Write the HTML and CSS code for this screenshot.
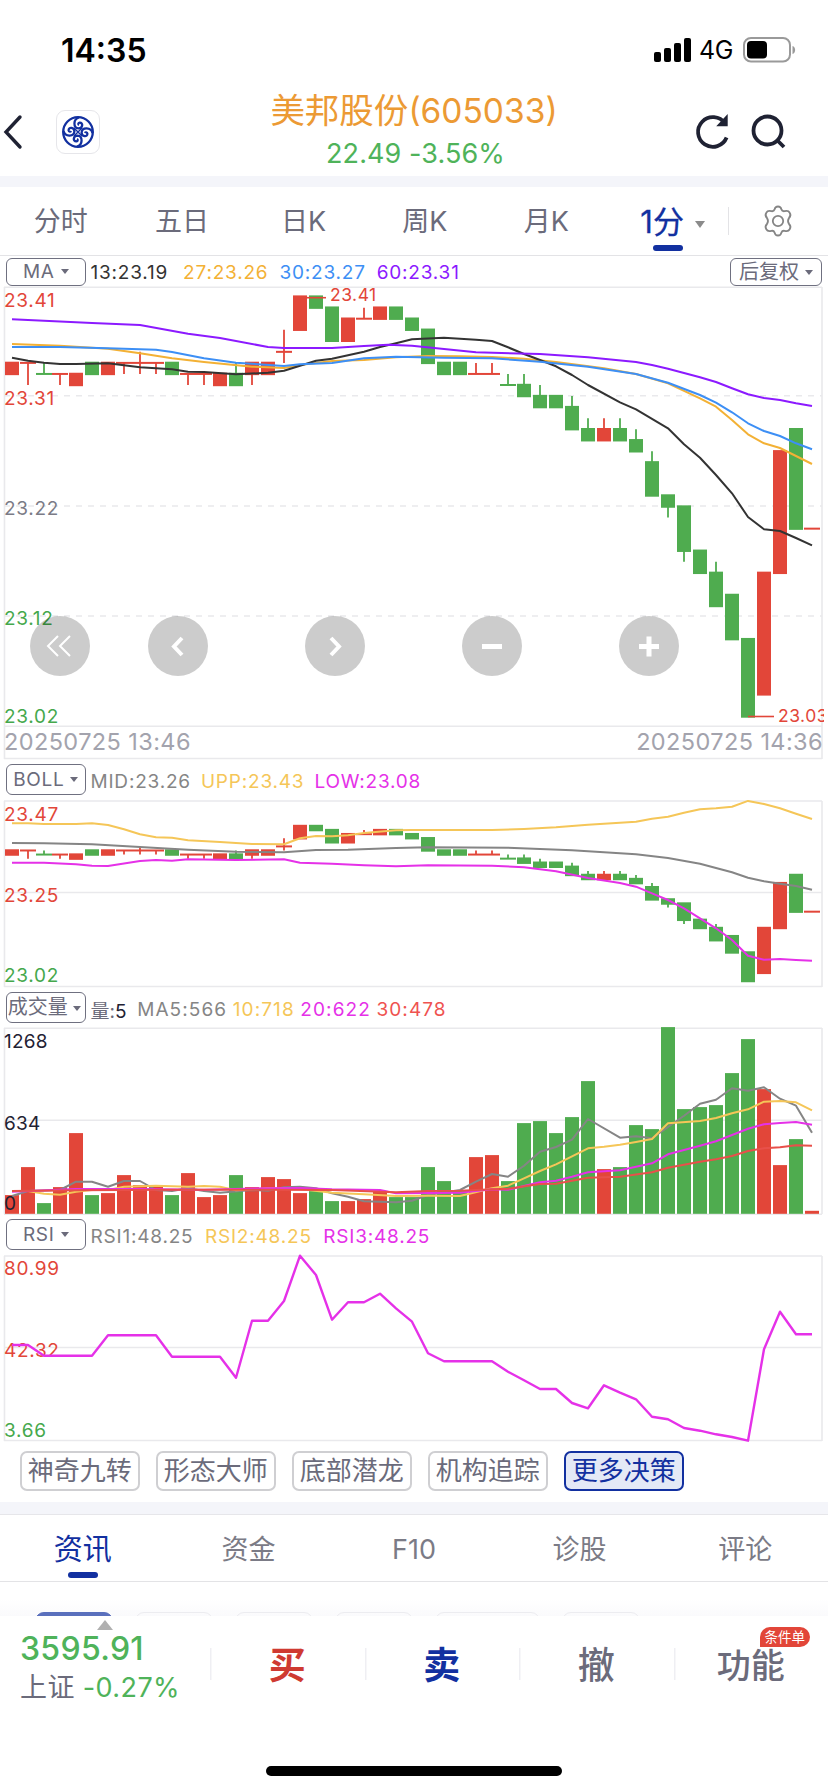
FILE: index.html
```
<!DOCTYPE html>
<html lang="zh-CN">
<head>
    <meta charset="UTF-8">
    <meta name="viewport" content="width=device-width, initial-scale=1.0">
    <title>美邦股份(605033)</title>
    <link rel="stylesheet" href="styles.css">
</head>
<body>
    <!-- Status bar -->
    <div class="status-bar">
        <span class="status-time">14:35</span>
        <div class="status-right">
            <svg width="38" height="24" viewBox="0 0 38 24">
                <rect x="0" y="14" width="7" height="10" rx="2"/>
                <rect x="10" y="10" width="7" height="14" rx="2"/>
                <rect x="20" y="5" width="7" height="19" rx="2"/>
                <rect x="30" y="0" width="7" height="24" rx="2"/>
            </svg>
            <span class="status-net">4G</span>
            <svg width="53" height="26" viewBox="0 0 53 26">
                <rect x="1" y="1" width="46" height="23.5" rx="7" fill="none" stroke="#9a9a9a" stroke-width="2"/>
                <rect x="4" y="4" width="20" height="17.5" rx="4"/>
                <path d="M49.5 9 C53 10 53 16 49.5 17 Z" fill="#9a9a9a"/>
            </svg>
        </div>
    </div>

    <!-- Title -->
    <header class="header">
        <svg class="back" width="20" height="34" viewBox="0 0 20 34"><path d="M17 2 L3 17 L17 32"/></svg>
        <div class="logo">
            <svg width="34" height="34" viewBox="-17 -17 34 34">
                <circle r="14.8"/>
                <g id="petal"><path d="M-14.5 -1 C-13 5 -4 5 -3.6 -0.5 C-3.6 -5 -9.6 -5.4 -9.4 -1.6 C-9.2 0 -7.4 0 -7 -1"/></g>
                <use href="#petal" transform="rotate(90)"/>
                <use href="#petal" transform="rotate(180)"/>
                <use href="#petal" transform="rotate(270)"/>
                <path d="M-4 -4 L4 4 M-4 4 L4 -4" stroke-width="1.4"/>
            </svg>
        </div>
        <div class="title">
            <div class="name">美邦股份<span>(605033)</span></div>
            <div class="quote">22.49 -3.56%</div>
        </div>
        <div class="actions">
            <svg width="36" height="36" viewBox="0 0 36 36"><path d="M30 9.5 A14.8 14.8 0 1 0 31.6 23.5"/><path d="M31.5 3 V11 H24 Z" stroke-width="2.4" fill="#1f2233"/></svg>
            <svg width="36" height="36" viewBox="0 0 36 36"><circle cx="16.5" cy="16.5" r="14"/><path d="M26.5 26.5 L33 33"/></svg>
        </div>
    </header>

    <!-- Period tabs -->
    <nav class="period-tabs">
        <a>分时</a>
        <a>五日</a>
        <a>日K</a>
        <a>周K</a>
        <a>月K</a>
        <a class="active">1分<i class="caret"></i></a>
        <div class="settings">
            <svg width="32" height="32" viewBox="0 0 32 32">
                <path d="M12.6 4.4 Q13.2 1.5 16 1.5 Q18.8 1.5 19.4 4.4 Q20.2 6.6 22.6 6.2 Q26.2 5 27.7 7.7 Q29.5 10.6 27 13 Q25 16 27 19 Q29.5 21.4 27.7 24.3 Q26.2 27 22.6 25.8 Q20.2 25.4 19.4 27.6 Q18.8 30.5 16 30.5 Q13.2 30.5 12.6 27.6 Q11.8 25.4 9.4 25.8 Q5.8 27 4.3 24.3 Q2.5 21.4 5 19 Q7 16 5 13 Q2.5 10.6 4.3 7.7 Q5.8 5 9.4 6.2 Q11.8 6.6 12.6 4.4 Z"/>
                <circle cx="16" cy="16" r="5.2"/>
            </svg>
        </div>
    </nav>

    <!-- K line -->
    <div class="legend legend-ma">
        <button class="picker">MA<i class="caret"></i></button>
        <span class="c-black">13:23.19</span>
        <span class="c-orange">27:23.26</span>
        <span class="c-blue">30:23.27</span>
        <span class="c-purple">60:23.31</span>
        <button class="picker picker-right">后复权<i class="caret"></i></button>
    </div>
    <div class="panel">
        <svg id="mainChart" width="828" height="474"></svg>
        <div class="controls">
            <button><svg viewBox="0 0 60 60" class="thin"><path d="M28 20 L18 30 L28 40 M40 20 L30 30 L40 40"/></svg></button>
            <button><svg viewBox="0 0 60 60"><path d="M34 22 L26 30.5 L34 39"/></svg></button>
            <button><svg viewBox="0 0 60 60"><path d="M26 22 L34 30.5 L26 39"/></svg></button>
            <button><svg viewBox="0 0 60 60" class="thick"><path d="M20 30.5 H40"/></svg></button>
            <button><svg viewBox="0 0 60 60" class="thick"><path d="M20 30.5 H40 M30 20.5 V40.5"/></svg></button>
        </div>
    </div>

    <!-- BOLL -->
    <div class="legend legend-boll">
        <button class="picker">BOLL<i class="caret"></i></button>
        <span class="c-gray">MID:23.26</span>
        <span class="c-yellow">UPP:23.43</span>
        <span class="c-magenta">LOW:23.08</span>
    </div>
    <div class="panel"><svg id="bollChart" width="828" height="188"></svg></div>

    <!-- Volume -->
    <div class="legend legend-vol">
        <button class="picker picker-cn">成交量<i class="caret"></i></button>
        <span class="c-dark"><em>量:</em>5</span>
        <span class="c-gray">MA5:566</span>
        <span class="c-yellow">10:718</span>
        <span class="c-magenta">20:622</span>
        <span class="c-coral">30:478</span>
    </div>
    <div class="panel"><svg id="volChart" width="828" height="189"></svg></div>

    <!-- RSI -->
    <div class="legend legend-rsi">
        <button class="picker">RSI<i class="caret"></i></button>
        <span class="c-gray">RSI1:48.25</span>
        <span class="c-yellow">RSI2:48.25</span>
        <span class="c-magenta">RSI3:48.25</span>
    </div>
    <div class="panel"><svg id="rsiChart" width="828" height="188"></svg></div>

    <div class="tools">
        <button>神奇九转</button>
        <button>形态大师</button>
        <button>底部潜龙</button>
        <button>机构追踪</button>
        <button class="active">更多决策</button>
    </div>

    <!-- Info tabs -->
    <div class="band"></div>
    <nav class="info-tabs">
        <a class="active">资讯</a>
        <a>资金</a>
        <a>F10</a>
        <a>诊股</a>
        <a>评论</a>
    </nav>
    <div class="filters">
        <i class="active"></i><i></i><i></i><i></i><i class="wide"></i><i></i>
    </div>

    <!-- Bottom bar -->
    <footer class="bottom-bar">
        <div class="index">
            <i class="expand"></i>
            <div class="index-value">3595.91</div>
            <div class="index-change">上证 <span>-0.27%</span></div>
        </div>
        <div class="trade buy">买</div>
        <div class="trade sell">卖</div>
        <div class="trade cancel">撤</div>
        <div class="trade more"><span>功能<b class="badge">条件单</b></span></div>
    </footer>
    <div class="home-indicator"></div>

    <script src="charts.js"></script>
</body>
</html>
```
FILE: styles.css
```
* {
    box-sizing: border-box;
}

body {
    margin: 0;
    width: 828px;
    height: 1792px;
    overflow: hidden;
    background: #fff;
    font-family: Inter, "Noto Sans CJK SC", sans-serif;
    color: #6b6b7b;
}

button {
    font-family: inherit;
    color: inherit;
    margin: 0;
    padding: 0;
}

svg {
    display: block;
    overflow: visible;
}

/* status bar */
.status-bar {
    height: 88px;
    padding: 11px 32px 0 61px;
    display: flex;
    align-items: center;
    justify-content: space-between;
    color: #000;
}

.status-time {
    padding-top: 2px;
    font-size: 32px;
    font-weight: 600;
}

.status-right {
    display: flex;
    align-items: center;
}

.status-net {
    font-size: 25px;
    width: 36px;
    margin: 0 8px 0 7px;
    letter-spacing: -0.3px;
}

/* header */
.header {
    height: 88px;
    display: flex;
    align-items: center;
    padding-left: 3px;
}

.back {
    fill: none;
    stroke: #1f2233;
    stroke-width: 3.4;
    stroke-linecap: round;
}

.logo {
    width: 44px;
    height: 44px;
    margin-left: 33px;
    border: 1px solid #e6e6ea;
    border-radius: 9px;
    display: flex;
    align-items: center;
    justify-content: center;
}

.logo svg {
    fill: none;
    stroke: #1230a0;
    stroke-width: 2.3;
}

.title {
    width: 562px;
    margin-left: 33px;
    text-align: center;
}

.name {
    font-size: 34.5px;
    line-height: 42px;
    color: #ec9a34;
}

.name span {
    font-size: 33.5px;
}

.quote {
    padding-left: 3px;
    font-size: 27px;
    line-height: 43px;
    letter-spacing: 0.1px;
    color: #4fb35a;
}

.actions {
    display: flex;
    gap: 20px;
}

.actions svg {
    fill: none;
    stroke: #1f2233;
    stroke-width: 3.8;
}

/* period tabs */
.period-tabs {
    height: 80px;
    border-top: 11px solid #f4f5fa;
    border-bottom: 1px solid #e3e3e6;
    display: flex;
    font-size: 27px;
    line-height: 69px;
}

.period-tabs a {
    width: 121.4px;
    text-align: center;
    position: relative;
}

.period-tabs .active {
    padding-left: 10px;
    color: #1230a0;
    font-size: 31px;
    -webkit-text-stroke: 0.3px #1230a0;
}

.period-tabs .active .caret {
    margin-left: 11px;
    border-width: 7px 5.5px 0;
    color: #8b8b8b;
}

.period-tabs .active::after,
.info-tabs .active::after {
    content: "";
    position: absolute;
    left: 50%;
    bottom: 4px;
    width: 30px;
    height: 6px;
    margin-left: -15px;
    border-radius: 3px;
    background: #1230a0;
}

.caret {
    display: inline-block;
    border: 4.5px solid transparent;
    border-top: 5.5px solid;
    border-bottom: 0;
    vertical-align: middle;
}

.settings {
    flex: 1;
    display: flex;
    align-items: center;
}

.settings::before {
    content: "";
    width: 1px;
    height: 28px;
    background: #e3e3e6;
    margin-right: 33px;
}

.settings svg {
    fill: none;
    stroke: #858585;
    stroke-width: 1.8;
}

/* indicator legends */
.legend {
    display: flex;
    align-items: center;
    padding: 0 6px;
    font-size: 19px;
    letter-spacing: 0.8px;
    white-space: nowrap;
}

.legend em {
    font-style: normal;
    color: #6b6b7b;
    letter-spacing: 0;
}

.picker {
    width: 79.5px;
    height: 31px;
    margin-right: 5px;
    border: 1.5px solid #6f7080;
    border-radius: 6px;
    background: #fff;
    font-size: 19px;
    line-height: 24px;
    letter-spacing: 0.7px;
}

.picker .caret {
    margin-left: 6px;
    margin-bottom: 1px;
}

.picker-cn {
    padding-right: 3px;
    font-size: 20px;
    letter-spacing: 0;
}

.picker-cn .caret {
    margin-left: 5px;
}

.picker-right {
    width: 92px;
    margin: 0 0 0 auto;
    font-size: 20px;
    letter-spacing: 0;
}

.legend-ma {
    height: 30px;
    padding-top: 1px;
}

.legend-ma .picker {
    height: 28px;
}

.legend-ma span {
    margin-right: 11px;
    padding-top: 2px;
}

.legend-ma .c-black {
    margin-right: 15px;
}

.legend-boll {
    height: 40px;
    padding-bottom: 1px;
}

.legend-vol {
    height: 38px;
    letter-spacing: 1.1px;
}

.legend-rsi {
    height: 39px;
}

.legend-boll span,
.legend-rsi span {
    margin-right: 11.5px;
    padding-top: 4px;
}

.legend-boll span {
    margin-right: 10px;
}

.legend-vol span {
    margin-right: 5.5px;
    padding-top: 4px;
}

.legend-vol .c-dark {
    margin-right: 9.5px;
}

.c-black { color: #333; }
.c-dark { color: #1f2233; }
.c-gray { color: #858585; }
.c-orange { color: #f3b135; }
.c-yellow { color: #f5c658; }
.c-blue { color: #3d8ff5; }
.c-purple { color: #8c1aff; }
.c-magenta { color: #e531e8; }
.c-coral { color: #ef5350; }

/* charts */
.panel {
    position: relative;
}

.frame {
    fill: none;
    stroke: #e9e9ec;
    stroke-width: 1.6;
}

.dash {
    stroke-dasharray: 6 6;
}

.up { fill: #e24639; stroke: #e24639; }
.down { fill: #4fac4f; stroke: #4fac4f; }

.line {
    fill: none;
    stroke-width: 2;
    stroke-linejoin: round;
}

#rsiChart .line {
    stroke-width: 2.4;
}

.axis {
    font-size: 19px;
    letter-spacing: 0.7px;
}

#volChart .axis {
    letter-spacing: 0.2px;
}

.axis-date {
    font-size: 23.5px;
    letter-spacing: 0.4px;
    fill: #a3a3ad;
}

.axis-red { fill: #e24639; }
.axis-green { fill: #45a84c; }
.axis-gray { fill: #7b7b86; }
.axis-dark { fill: #1f2233; }

.mark {
    font-size: 17.5px;
    letter-spacing: 0.5px;
    fill: #e24639;
}

.controls {
    position: absolute;
    left: 30px;
    top: 330px;
    display: grid;
    grid-template-columns: 118px 157px 156.5px 157px 60px;
}

.controls button {
    width: 60px;
    height: 60px;
    border: 0;
    border-radius: 50%;
    background: rgba(0, 0, 0, 0.2);
}

.controls svg {
    fill: none;
    stroke: #fff;
    stroke-width: 4;
}

.controls .thin { stroke-width: 2; }
.controls .thick { stroke-width: 5; }

/* decision tools */
.tools {
    height: 60px;
    padding: 9px 20px 0;
    display: flex;
    gap: 16.5px;
}

.tools button {
    width: 119.5px;
    height: 40px;
    border: 2px solid #cfcfd2;
    border-radius: 7px;
    background: #fff;
    font-size: 26px;
    line-height: 36px;
}

.tools .active {
    border-color: #1230a0;
    background: #e4e9f6;
    color: #1230a0;
}

/* info tabs */
.band {
    height: 12px;
    background: #f4f5fa;
}

.info-tabs {
    height: 68px;
    border-top: 1px solid #e6e6ea;
    border-bottom: 1px solid #e3e3e6;
    display: flex;
    font-size: 27px;
    line-height: 69px;
    color: #7b7b86;
}

.info-tabs a {
    flex: 1;
    text-align: center;
    position: relative;
}

.info-tabs .active {
    color: #1230a0;
    font-size: 29px;
}

.info-tabs .active::after {
    bottom: 3px;
}

.filters {
    height: 34px;
    padding: 30px 35px 0;
    display: flex;
    gap: 22px;
    overflow: hidden;
    background: linear-gradient(#fff 50%, #fafafc);
}

.filters i {
    flex: none;
    width: 78px;
    height: 40px;
    border: 1.5px solid #ececf0;
    border-radius: 9px;
}

.filters .wide {
    width: 105px;
}

.filters .active {
    background: #5a70bd;
    border-color: #5a70bd;
}

/* bottom bar */
.bottom-bar {
    height: 150px;
    display: flex;
    background: #fff;
}

.index {
    width: 210px;
    padding: 4px 0 0 20px;
}

.expand {
    display: block;
    width: 0;
    margin-left: 77px;
    border: 8px solid transparent;
    border-bottom: 10px solid #b0b0b0;
    border-top: 0;
}

.index-value {
    font-size: 32px;
    line-height: 38px;
    font-weight: 500;
    letter-spacing: 0.3px;
    color: #4fb35a;
}

.index-change {
    font-size: 27px;
    line-height: 39px;
    letter-spacing: 0.4px;
}

.index-change span {
    color: #4fb35a;
}

.trade {
    width: 154.5px;
    height: 100px;
    font-size: 37px;
    line-height: 100px;
    font-weight: 700;
    text-align: center;
    background: linear-gradient(#efeff3, #efeff3) no-repeat left 32px / 1.5px 32px;
}

.buy { color: #cf3a31; }
.sell { color: #1230a0; }
.cancel { font-weight: 500; }

.more {
    font-size: 34px;
    font-weight: 500;
}

.more span {
    position: relative;
}

.badge {
    position: absolute;
    left: 43px;
    top: -18px;
    width: 50px;
    height: 20px;
    border-radius: 10px 10px 10px 0;
    background: #e24639;
    color: #fff;
    font-size: 13.5px;
    font-weight: 400;
    line-height: 20px;
}

.home-indicator {
    width: 296px;
    height: 10px;
    margin: 0 auto;
    border-radius: 5px;
    background: #000;
}
```
FILE: charts.js
```
const NS = 'http://www.w3.org/2000/svg';
const STEP = 16;
const FIRST = 12;

// [dir, top, bottom, high, low] in cents below 23.41
const candles = [
    ['u', 6, 7], ['u', 6, 6, 6, 8], ['d', 7, 7, 6, 7], ['u', 7, 7, 7, 8], ['u', 7, 8],
    ['d', 6, 7], ['u', 6, 7], ['u', 6, 6, 6, 7], ['u', 6, 6, 5, 7], ['u', 6, 6, 6, 7],
    ['d', 6, 7], ['u', 7, 7, 7, 8], ['u', 7, 7, 7, 8], ['u', 7, 8], ['d', 7, 8, 6, 8],
    ['u', 6, 7, 6, 8], ['u', 6, 7], ['u', 5, 5, 3, 6], ['u', 0, 3], ['d', 0, 1],
    ['d', 1, 4], ['u', 2, 4], ['u', 2, 2, 1, 2], ['u', 1, 2], ['d', 1, 2],
    ['d', 2, 3], ['d', 3, 6], ['d', 6, 7], ['d', 6, 7], ['u', 7, 7, 6, 7],
    ['u', 7, 7, 6, 7], ['d', 8, 8, 7, 8], ['d', 8, 9, 7, 9], ['d', 9, 10, 8, 10], ['d', 9, 10],
    ['d', 10, 12, 9, 12], ['d', 12, 13, 11, 13], ['u', 12, 13, 11, 13], ['d', 12, 13, 11, 13], ['d', 13, 14, 12, 14],
    ['d', 15, 18, 14, 18], ['d', 18, 19, 18, 20], ['d', 19, 23, 19, 24], ['d', 23, 25], ['d', 25, 28, 24, 28],
    ['d', 27, 31], ['d', 31, 38], ['u', 25, 36], ['u', 14, 25], ['d', 12, 21], ['u', 21, 21]
];

const volumes = [
    18.7, 46.7, 10.7, 26.7, 80.7, 18.7, 20.7, 38.7, 28.7, 28.7, 18.7, 40.7, 16.7, 18.7, 38.7, 26.7, 36.7,
    34.7, 20.7, 22.7, 12.7, 12.7, 14.7, 22, 16.7, 16.7, 46.7, 32.7, 22.7, 56.7, 58.7, 32.7, 90.7, 92.7,
    80.7, 96.7, 132.7, 44.7, 46.7, 88.7, 84.7, 186.7, 104.7, 106.7, 108.7, 140.7, 174.7, 124.7, 48.7, 74.7, 3
];

function add(svg, tag, attrs, text) {
    const el = document.createElementNS(NS, tag);
    for (const k in attrs) el.setAttribute(k, attrs[k]);
    if (text) el.textContent = text;
    svg.appendChild(el);
    return el;
}

function hline(svg, y, dashed) {
    add(svg, 'path', { class: dashed ? 'frame dash' : 'frame', d: `M4 ${y} H822` });
}

function sides(svg, top, bottom) {
    add(svg, 'path', { class: 'frame', d: `M4.5 ${top} V${bottom} M822 ${top} V${bottom}` });
}

function label(svg, text, y, color) {
    add(svg, 'text', { class: 'axis axis-' + color, x: 4, y: y }, text);
}

// "index y index y ..." pairs
function line(svg, color, data) {
    const n = data.trim().split(/\s+/).map(Number);
    const pts = [];
    for (let i = 0; i < n.length; i += 2) pts.push((FIRST + n[i] * STEP) + ',' + n[i + 1]);
    add(svg, 'polyline', { class: 'line', stroke: color, points: pts.join(' ') });
}

function drawCandles(svg, base, scale) {
    candles.forEach(([dir, top, bottom, high, low], i) => {
        const x = FIRST + i * STEP;
        const cls = dir === 'u' ? 'up' : 'down';
        const y = v => base + v * scale;
        if (high !== undefined) {
            add(svg, 'path', { class: cls, 'stroke-width': 1.8, d: `M${x} ${y(high)} V${y(low)}` });
        }
        if (top === bottom) {
            add(svg, 'path', { class: cls, 'stroke-width': 2, d: `M${x - 8} ${y(top)} h16` });
        } else {
            add(svg, 'rect', { class: cls, 'stroke-width': 0, x: x - 7, y: y(top) - 1.2, width: 14, height: y(bottom) - y(top) + 2.4 });
        }
    });
}

// K line
const main = document.getElementById('mainChart');
hline(main, 1.3);
hline(main, 109.7, true);
hline(main, 220, true);
hline(main, 330, true);
hline(main, 440.3);
hline(main, 472.5);
sides(main, 1, 473);
drawCandles(main, 10.6, 11.05);
line(main, '#f3b135', '0 58 3 59.7 6 62.7 8 67.3 10 72.3 12 76 15 80.7 17 82 18 79 20 75 22 74 24 71.3 26 70 28 70.3 30 71 32 72.7 34 76 37 82.3 39 88 41 97.3 43 112.3 44 120.7 45 134 46 148.3 47 157.3 48 162 49 170 50 178');
line(main, '#333', '0 71.7 1 74.7 2 76.7 3 78 4 78 6 77.3 8 81.3 9 82.3 10 83.3 11 85.7 12 86 14 88.3 16 86.7 17 84.7 18 79.7 19 74.7 20 72.7 22 65.7 23 61 24 57.3 25 53.3 27 51.7 29 53.7 30 55 31 61.3 32 68 33 74 34 80.3 35 89 36 99 38 116.3 39 123.3 41 142.3 42 158.3 43 171.7 44 189 45 207.3 46 231 47 243.3 48 245 49 252 50 259.3');
line(main, '#3d8ff5', '0 61 3 61 6 62.3 9 63.7 10 66 12 72.3 14 76.7 17 80 18 78.3 20 77 22 72.3 24 70.7 27 71.7 30 72.3 33 75.7 36 80.7 39 88 41 96.7 43 109 44 116.7 45 126.3 46 137.3 47 145 48 150 49 157.3 50 163.3');
line(main, '#8c1aff', '0 33.3 5 37 8 39 11 47.7 13 52 16 61 17 62 20 62 22 60 23.5 58.7 25 59.7 27 63 29 66.3 33 68 36 71.3 39 76 40 79 41 82.7 43 91.3 44 96 45 102.3 46 108.3 47 112 48 114 49 117.3 50 120');
label(main, '23.41', 21, 'red');
label(main, '23.31', 119, 'red');
label(main, '23.22', 229, 'gray');
label(main, '23.12', 339, 'green');
label(main, '23.02', 437, 'green');
add(main, 'path', { class: 'up', 'stroke-width': 1.6, d: 'M307 11.7 H326' });
add(main, 'text', { class: 'mark', x: 330, y: 15.3 }, '23.41');
add(main, 'path', { class: 'up', 'stroke-width': 1.6, d: 'M748 430.5 H774' });
add(main, 'text', { class: 'mark', x: 778, y: 435.7 }, '23.03');
add(main, 'rect', { x: 824, y: 400, width: 4, height: 40, fill: '#fff' });
add(main, 'text', { class: 'axis-date', x: 4, y: 464 }, '20250725 13:46');
add(main, 'text', { class: 'axis-date', x: 823, y: 464, 'text-anchor': 'end' }, '20250725 14:36');

// BOLL
const boll = document.getElementById('bollChart');
hline(boll, 1);
hline(boll, 92.5);
hline(boll, 186.5);
sides(boll, 1, 187);
drawCandles(boll, 26, 4.08);
line(boll, '#f5c658', '0 23.3 1 23.3 2 24 4 24 5 23.3 6 25 7 29.3 8 34.3 9 37.3 10 37.7 11 40.3 13 42 15 44 17 44.3 18 38.3 19 36 20 36.3 21 35.3 22 33 24 30.3 25 30 30 30 32 29 34 27.3 36 24.7 39 21.7 40 18.7 41 16.7 42 12.7 43 9.3 44 8.3 45 6.7 46 0.9 47 4 48 8.3 49 13.7 50 19');
line(boll, '#858585', '0 43 2 43.3 5 44.3 8 47 11 49.7 14 51.7 17 52.3 19 50 21 49.7 24 48 26 47.3 31 47.7 35 50.3 39 54.3 41 58 43 63.7 45 72.3 46 77.7 47 81.3 48 83.7 49 86 50 89.7');
line(boll, '#e531e8', '0 62.7 2 62.7 4 64.3 5 65.7 6 66 8 61 9 60 10 60.7 11 59.3 14 60 17 59.3 18 62.7 20 63.7 22 65.3 24 66.3 26 65.3 30 65.7 32 67.3 34 71.3 36 78 38 83 39 86.7 40 93.3 41 100 42 108.3 43 118.3 44 128.3 45 140 46 155.7 47 159.7 48 159 49 160 50 160.7');
label(boll, '23.47', 20.5, 'red');
label(boll, '23.25', 102.3, 'red');
label(boll, '23.02', 182, 'green');

// volume
const vol = document.getElementById('volChart');
hline(vol, 2.3);
hline(vol, 94.3);
hline(vol, 188.2);
sides(vol, 2, 188);
volumes.forEach((h, i) => {
    add(vol, 'rect', {
        class: candles[i][0] === 'u' ? 'up' : 'down', 'stroke-width': 0,
        x: FIRST + i * STEP - 7, y: 187.8 - h, width: 14, height: h
    });
});
line(vol, '#858585', '0 170 1 165 3 164 4 155.7 5 155.7 6 160.7 7 155 8 155 9 164 10 165 11 162.3 12 165 13 166.7 15 164 16 164.7 17 161.3 18 160.7 19 162.3 20 167.3 21 170.7 22 175.3 24 176.3 25 174.7 26 169 28 164 29 155.7 30 148 31 150.7 32 139.7 33 125.7 34 121 35 113.7 36 93 38 111.7 39 110.3 40 112.3 41 101 42 89.7 43 77.7 44 73.7 45 62.3 46 64.7 47 61.3 48 72.7 49 79.7 50 106.7');
line(vol, '#f5c658', '0 165 1 165 2 167.7 3 168.7 4 165.7 5 164 6 164 7 160.7 9 159.7 11 160.7 12 160 13 160.7 14 164.3 16 162.3 18 163 20 166.7 22 168.3 24 170 26 169.7 28 170 30 162.3 31 159.7 32 152.3 33 145 34 138.3 36 122.3 37 120.7 38 118.7 39 116 40 113 41 97.3 43 95 44 92 45 87.3 46 83.3 47 75.7 48 75 49 76.3 50 84.3');
line(vol, '#e531e8', '0 165.7 4 163 8 163 12 163.7 16 162.3 18 162 20 163.3 23 164 24 167.3 26 167 28 166.7 30 163.3 31 163.7 33 156.3 34 154.7 35 150.7 36 146.3 38 144.3 40 137.3 41 128.3 43 119.7 44 115.3 45 109 46 102.7 47 98.3 48 97 49 96 50 98.7');
line(vol, '#e8504a', '0 165 4 164.3 10 163.7 16 163.7 20 164 24 166.3 26 165 28 164.7 30 163.3 31 162.7 33 158 34 157.7 36 151.7 38 150.7 40 146.3 41 141.7 43 135.7 44 133.3 45 130 46 125 47 122.3 48 121.3 49 119.3 50 119.7');
label(vol, '1268', 22, 'dark');
label(vol, '634', 103.5, 'dark');
label(vol, '0', 183.5, 'dark');

// RSI
const rsi = document.getElementById('rsiChart');
hline(rsi, 2);
hline(rsi, 93.5);
hline(rsi, 186.5);
sides(rsi, 2, 187);
label(rsi, '80.99', 21, 'red');
label(rsi, '42.32', 103, 'red');
label(rsi, '3.66', 183, 'green');
line(rsi, '#e531e8', '0 91 1 91 2 101.7 5 101.7 6 81.3 9 81.3 10 102.7 13 102.7 14 123.7 15 66.7 16 66.7 17 47 18 1.7 19 21 20 65.7 21 48.3 22 48.3 23 39.7 24 54.3 25 67.7 26 99.3 27 107.3 30 107.3 31 117.7 32 126.3 33 135 34 135 35 149 36 154.3 37 131.3 38 138.7 39 145.3 40 162.7 41 165.3 42 174 43 176.7 44 180.3 45 183 46 186.7 47 95.3 48 57.7 49 80.3 50 80.3');
```
